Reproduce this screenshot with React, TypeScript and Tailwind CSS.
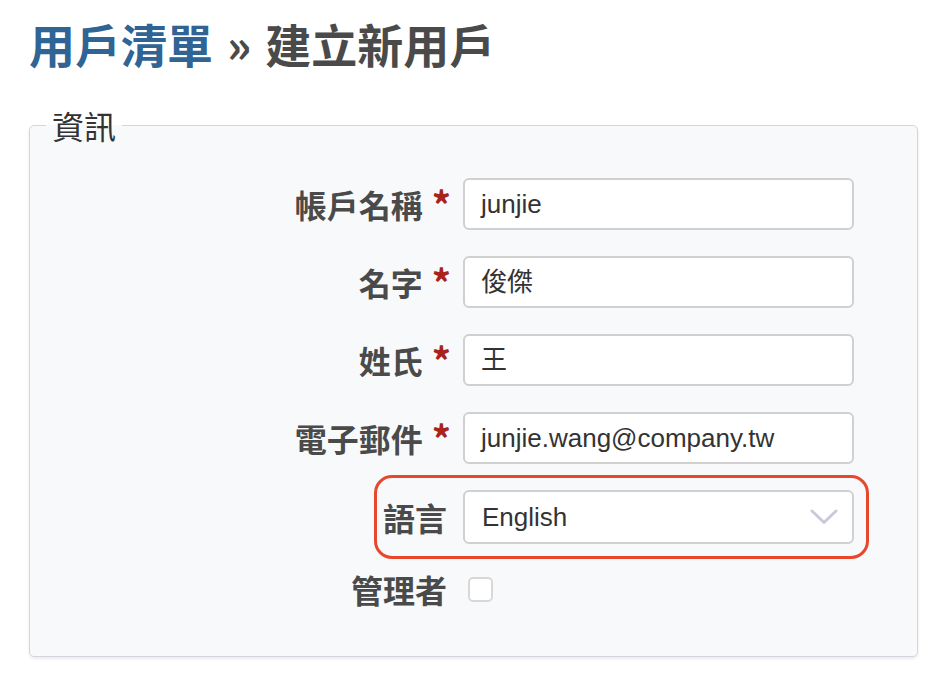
const CJK = "font-['Noto_Sans_CJK_TC','Noto_Sans',sans-serif]";
const LATIN = "font-['Liberation_Sans','Noto_Sans_CJK_TC',sans-serif]";

const fields = [
  { label: "帳戶名稱", value: "junjie" },
  { label: "名字", value: "俊傑" },
  { label: "姓氏", value: "王" },
  { label: "電子郵件", value: "junjie.wang@company.tw" },
];

function Required() {
  return <span className="ml-[9px] text-[38px] leading-none text-[#a8231a]">*</span>;
}

export default function App() {
  return (
    <div className={`min-h-screen bg-white pl-[29px] pr-[24px] pt-[15px] ${CJK}`}>
      <h1 className="text-[46px] font-bold leading-[56px] text-[#4a4a4a]">
        <span className="text-[#2f6494]">用戶清單</span>
        <span className="mx-[14px]">»</span>
        建立新用戶
      </h1>

      <fieldset className="mt-[34px] rounded-[5px] border border-[#d3d6dc] bg-[#f8f9fa] pb-[44px] shadow-[0_2px_3px_rgba(0,0,0,0.08)]">
        <legend className="ml-[16px] px-[6px] text-[32px] leading-[40px] text-[#333]">資訊</legend>

        <div className="mt-[33px] flex flex-col gap-[26px]">
          {fields.map((f) => (
            <div key={f.label} className="flex items-center">
              <div className="flex w-[421px] items-center justify-end text-[32px] font-bold leading-none text-[#4a4a4a]">
                {f.label}
                <Required />
              </div>
              <div
                className={`ml-[12px] flex h-[52px] w-[391px] items-center rounded-[6px] border-2 border-[#d0d0d0] bg-white px-[16px] text-[26px] text-[#333] ${LATIN}`}
              >
                {f.value}
              </div>
            </div>
          ))}

          <div className="relative flex items-center">
            <div className="pointer-events-none absolute left-[344px] top-[-15px] h-[84px] w-[495px] rounded-[18px] border-[3px] border-[#e8472e]" />
            <div className="flex w-[421px] justify-end pr-[4px] text-[32px] font-bold leading-none text-[#4a4a4a]">
              語言
            </div>
            <div
              className={`ml-[12px] flex h-[54px] w-[391px] items-center justify-between rounded-[6px] border-2 border-[#d0d0d0] bg-white pl-[17px] pr-[14px] text-[26px] text-[#333] ${LATIN}`}
            >
              English
              <svg width="28" height="16" viewBox="0 0 28 16" fill="none">
                <polyline points="2,2 14,13.5 26,2" stroke="#c9c9dc" strokeWidth="3" strokeLinecap="round" strokeLinejoin="round" />
              </svg>
            </div>
          </div>

          <div className="-mt-[4px] flex h-[46px] items-center">
            <div className="flex w-[421px] justify-end pr-[4px] text-[32px] font-bold leading-none text-[#4a4a4a]">
              管理者
            </div>
            <div className="ml-[17px] h-[25px] w-[25px] rounded-[5px] border-2 border-[#d8d8d8] bg-white" />
          </div>
        </div>
      </fieldset>
    </div>
  );
}
